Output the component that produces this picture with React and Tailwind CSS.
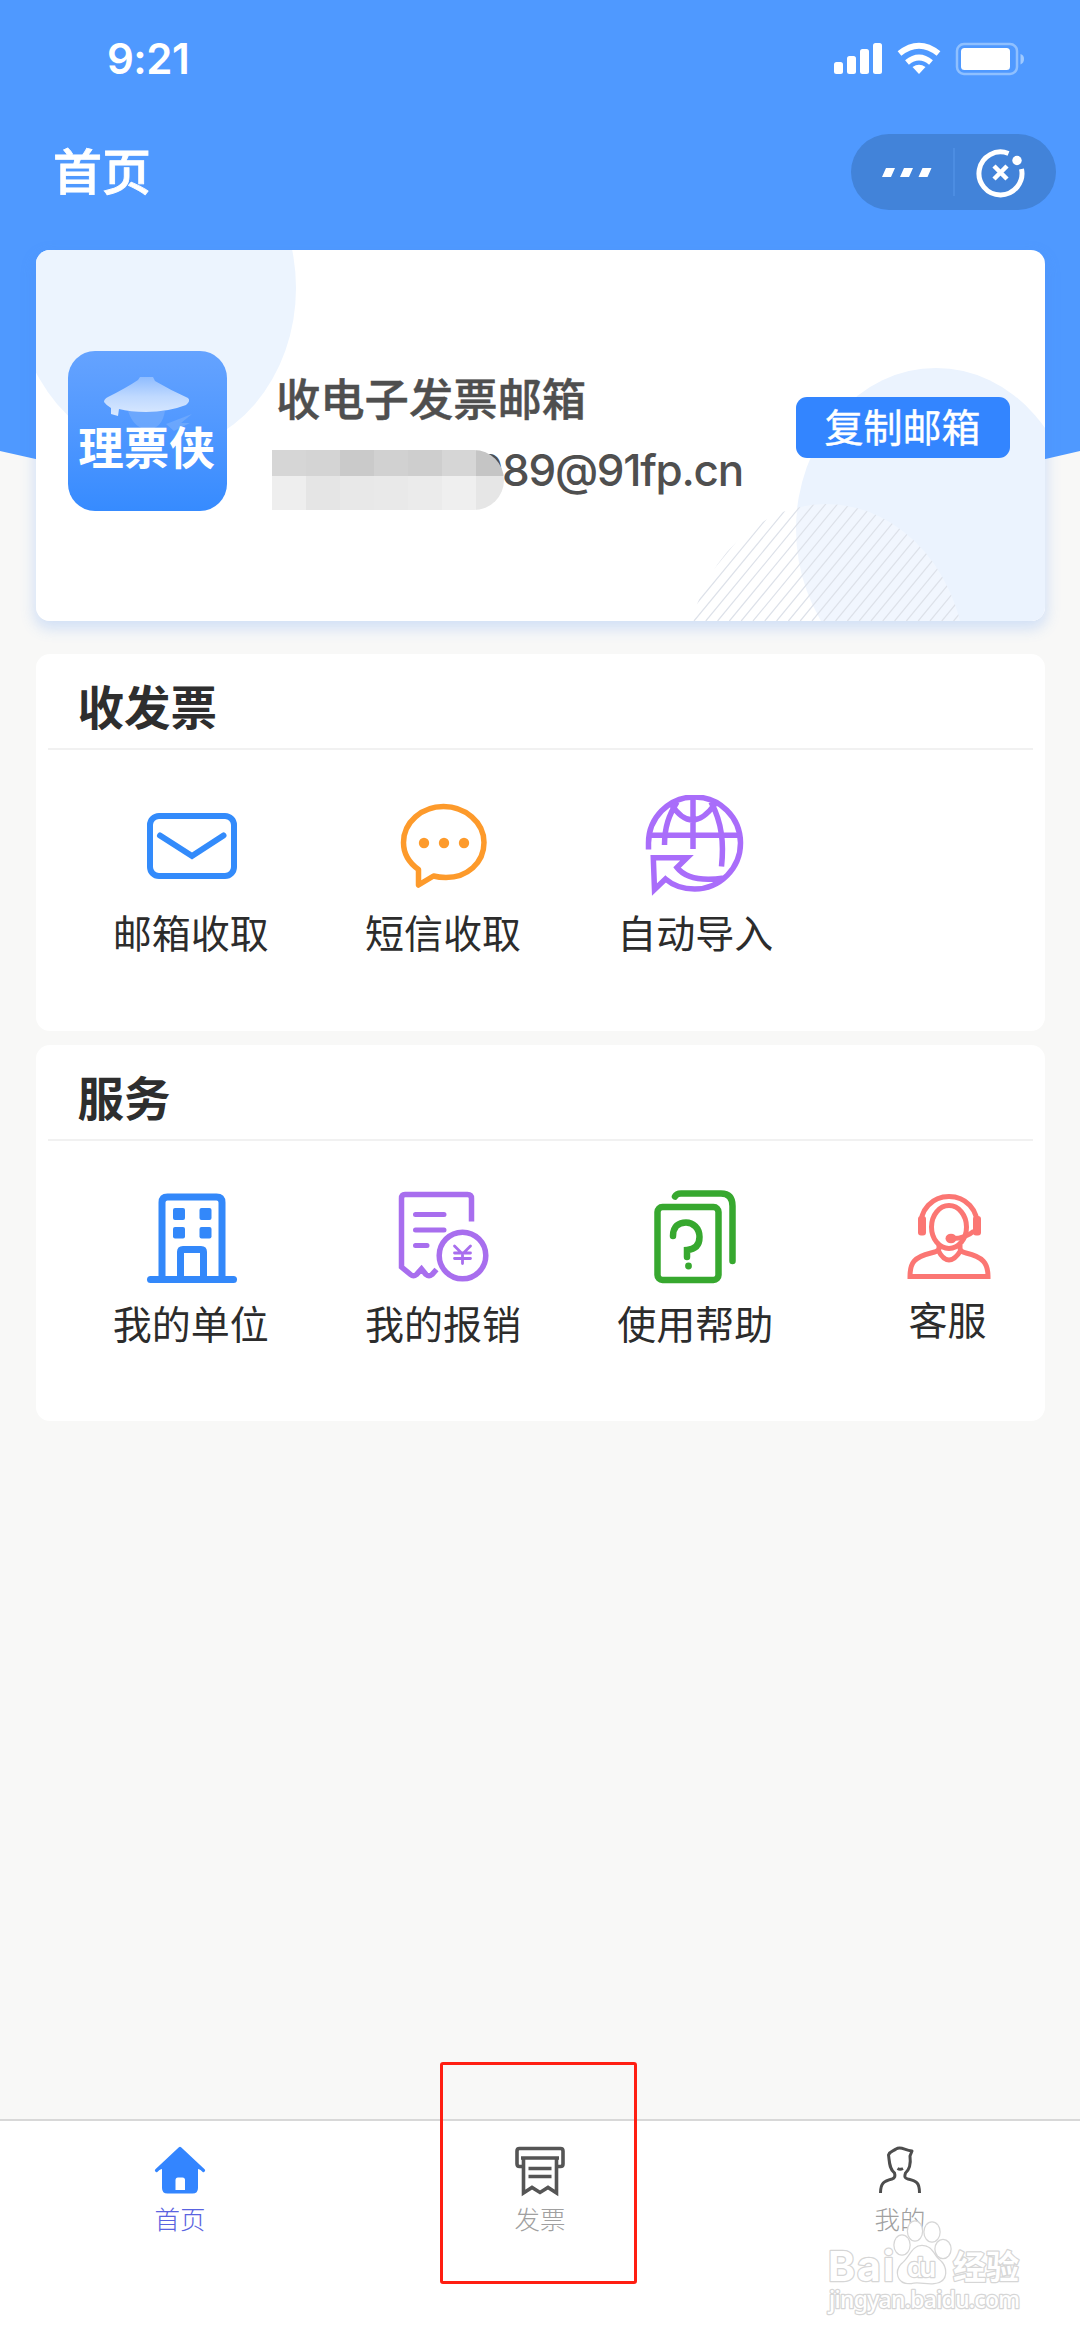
const receiveItems = [
  { label: "邮箱收取", icon: MailIcon },
  { label: "短信收取", icon: SmsIcon },
  { label: "自动导入", icon: ImportIcon },
];

const serviceItems = [
  { label: "我的单位", icon: CompanyIcon },
  { label: "我的报销", icon: ExpenseIcon },
  { label: "使用帮助", icon: HelpIcon },
  { label: "客服", icon: SupportIcon, compact: true },
];

const tabs = [
  { label: "首页", icon: HomeIcon, active: true },
  { label: "发票", icon: InvoiceIcon },
  { label: "我的", icon: ProfileIcon },
];

// greys of the blurred part of the address, two rows of blocks
const mosaic = [
  ["#d6d6d6", "#d4d4d4", "#cacaca", "#d1d1d1", "#cecece", "#d6d6d6", "#c5c5c5"],
  ["#eeeeee", "#e5e5e5", "#e8e8e8", "#e9e9e9", "#ebebeb", "#efefef", "#e6e6e6"],
];

// x of each diagonal where it meets the bottom edge of the card
const hatchLines = Array.from({ length: 36 }, (_, i) => 540 + i * 11.8);

function MailIcon() {
  return (
    <svg width="100" height="100" viewBox="-1 -1 100 100" fill="none" stroke="#338bfb" strokeWidth="6">
      <rect x="8" y="20" width="84" height="60" rx="9" />
      <path d="M18 39.5 50 60 81.500 39.500" strokeLinecap="round" />
    </svg>
  );
}

function SmsIcon() {
  return (
    <svg width="100" height="100" viewBox="0 0 100 100" fill="none" stroke="#fd9a2b" strokeWidth="5.500" strokeLinejoin="round">
      <path d="M25.500 74.500C15 67 10.500 58 10.500 47.500 10.500 27 29 11.500 50.500 11.500S91 27 91 47.500 74 82.500 53 82.500Q46 82.500 40.500 81L25.500 90Z" />
      <g fill="#fd9a2b" stroke="none">
        <circle cx="31" cy="48" r="5.200" />
        <circle cx="51" cy="48" r="5.200" />
        <circle cx="71" cy="48" r="5.200" />
      </g>
    </svg>
  );
}

function ImportIcon() {
  return (
    <svg width="100" height="102" viewBox="0 0 100 102" fill="none" stroke="#a96dfa" strokeWidth="5.500">
      <path d="M3.500 54.500V48.500A46 46 0 1 1 49.700 94Q32 94 20.500 84L9.500 94.500 8.300 62.800H42L32 72.500Q44 88 79 83" />
      <path d="M5 40.300H95M48 4V54M19.500 50C19.500 32 24 20 32 7M76.500 71.500C79 48 77 28 66 7M26 9Q47 41 70 9" />
    </svg>
  );
}

function CompanyIcon() {
  return (
    <svg width="100" height="100" viewBox="-1 -1 100 100" fill="none" stroke="#3388fa" strokeWidth="7">
      <path d="M20 92V15.500Q20 10 25.500 10H74.500Q80 10 80 15.500V92" />
      <path d="M38.500 92V65Q38.500 62.500 41 62.500H59Q61.500 62.500 61.500 65V92" />
      <path d="M8.500 92.500H91.500" strokeLinecap="round" />
      <g fill="#3388fa" stroke="none">
        <rect x="31" y="21" width="12" height="12" rx="2" />
        <rect x="57.500" y="21" width="12" height="12" rx="2" />
        <rect x="31" y="40" width="12" height="11.500" rx="2" />
        <rect x="57.500" y="40" width="12" height="11.500" rx="2" />
      </g>
    </svg>
  );
}

function ExpenseIcon() {
  return (
    <svg width="100" height="100" viewBox="0 0 100 100" fill="none" stroke="#a86eee" strokeWidth="5.500">
      <path d="M78.500 35.500V12.500Q78.500 8.500 74.500 8.500H12Q8.500 8.500 8.500 12.500V81L17.500 88.500Q20.500 91 23.500 88.500L28.500 83 33 88.500Q36 91 39 88.500L43.500 83.500" />
      <path d="M22.500 28.500H51M22.500 44H51M22.500 59.500H34" strokeLinecap="round" strokeWidth="5" />
      <circle cx="69.500" cy="69.500" r="23.300" />
      <path d="M61.500 60 69.500 68 77.500 60M69.500 68V77.500M61.500 67H77.500M61.500 72.500H77.500" strokeWidth="2.800" strokeLinecap="round" />
    </svg>
  );
}

function HelpIcon() {
  return (
    <svg width="100" height="100" viewBox="0 2 100 100" fill="none" stroke="#37a82f" strokeWidth="6.500" strokeLinecap="round">
      <rect x="12.500" y="23" width="61" height="73" rx="5" />
      <path d="M30 12.500Q31.500 9.500 36 9.500H76Q87.500 9.500 87.500 22V77" />
      <path d="M28 52C28 42 34 38.500 41 38.500S54.500 44 54.500 53Q54.500 65 42 66V73" />
      <circle cx="43.500" cy="82" r="3.400" fill="#37a82f" stroke="none" />
    </svg>
  );
}

function SupportIcon() {
  return (
    <svg width="100" height="100" viewBox="-1 1 100 100" fill="none" stroke="#fb7673" strokeWidth="5">
      <path d="M22 40C20 20 34 7.500 50 7.500S80 20 78 40" />
      <ellipse cx="50" cy="38" rx="17.500" ry="21.500" />
      <path d="M40 56V59C40 62 36 63 32 64 15 68 11 74 11 87.500H89C89 74 84 68 67 64 63 63 61 62 61 59V56M39 61Q44 71 50 71T62 61M52 49.500Q66 50 75 42" />
      <g fill="#fb7673" stroke="none">
        <rect x="19" y="27" width="8" height="19.500" rx="3" />
        <rect x="74" y="27" width="8" height="19.500" rx="3" />
        <ellipse cx="52" cy="49.500" rx="5.500" ry="4.800" />
      </g>
    </svg>
  );
}

function HomeIcon() {
  return (
    <svg width="54" height="56" viewBox="0 0 54 56">
      <path d="M27 6 50 28.500 45 27V46Q45 51.500 39.500 51.500H14.500Q9 51.500 9 46V27L4 28.500Z" fill="#3385ff" />
      <path d="M3.500 28.500 27 6.500 50.500 28.500" fill="none" stroke="#3385ff" strokeWidth="3.200" strokeLinecap="round" strokeLinejoin="round" />
      <path d="M22.500 48V38Q22.500 35.500 25 35.500H29.500Q32 35.500 32 38V48Z" fill="#fff" />
    </svg>
  );
}

function InvoiceIcon() {
  return (
    <svg width="54" height="56" viewBox="0 0 54 56" fill="none" stroke="#555" strokeWidth="3.600">
      <path d="M10 24.500H6.500Q4 24.500 4 22V9Q4 6.500 6.500 6.500H47.500Q50 6.500 50 9V22Q50 24.500 47.500 24.500H44" />
      <path d="M8 16H46M10.500 16V51L19 45.500 27 50.500 35 45.500 43.500 51V16M15.500 26.500H38.500M15.500 34.500H38.500" />
    </svg>
  );
}

function ProfileIcon() {
  return (
    <svg width="54" height="56" viewBox="0 1 54 56" fill="none" stroke="#4d4d4d" strokeWidth="3" strokeLinejoin="round">
      <path d="M7.500 52C7.500 42 11 40 19 38 22 37 22.500 35 21.500 32 16 28 16.500 20 15.500 14 17 10 20 10.500 23 8 28 5 31 9 39 10L37 15C38 23 37 28 32.500 32 31.500 35 31 37 35 38 44 40 46.500 42 46.500 52" />
      <path d="M24.500 27.500Q27 29 30 27.500" />
    </svg>
  );
}

function StatusBar() {
  return (
    <div className="flex h-[118px] items-center justify-between pl-[107px] pr-[55px] text-white">
      <span className="font-[Inter] text-[42px] font-semibold leading-none tracking-[-0.5px]">9:21</span>
      <svg width="192" height="34" viewBox="0 0 192 34" fill="#fff">
        <rect x="1" y="20" width="9" height="12" rx="2.500" />
        <rect x="14" y="14" width="9" height="18" rx="2.500" />
        <rect x="27" y="7" width="9" height="25" rx="2.500" />
        <rect x="40" y="1" width="9" height="31" rx="2.500" />
        <g fill="none" stroke="#fff" strokeWidth="6">
          <path d="M66.500 11.500Q86 -4 105.500 11.500" />
          <path d="M74 20.500Q86 10.500 98 20.500" />
        </g>
        <path d="M79.500 25Q86 20.500 92.500 25L86 32Z" />
        <rect x="124" y="2" width="60" height="30" rx="7" fill="none" stroke="#8fc0ff" strokeWidth="2.500" />
        <rect x="128" y="6" width="49" height="22" rx="3.500" />
        <path d="M187.500 12Q191 13 191 17T187.500 22.500Z" fill="#a0caff" />
      </svg>
    </div>
  );
}

function TitleBar() {
  return (
    <div className="flex h-[108px] items-center justify-between pl-[53px] pr-6">
      <h1 className="-mt-2 text-[49px] font-medium leading-none text-white [-webkit-text-stroke:0.8px_#fff]">首页</h1>
      <div className="flex h-[76px] w-[205px] items-center rounded-full bg-[#4283d9]">
        <svg width="205" height="76" viewBox="0 0 205 76" fill="#fff">
          <path d="M35 34H44L40 43H31ZM53 34H62L58 43H49ZM71.500 34H80.500L76.500 43H67.500Z" />
          <path d="M103 14V62" stroke="#5190e4" strokeWidth="1.500" />
          <g fill="none" stroke="#fff" strokeWidth="5">
            <path d="M157.500 19.500A21.500 21.500 0 1 0 170.500 35" />
            <path d="M143 32 156 45M156 32 143 45" strokeWidth="4.500" />
          </g>
          <circle cx="166" cy="26.500" r="4.700" />
        </svg>
      </div>
    </div>
  );
}

function AppLogo() {
  return (
    <div className="relative flex h-40 w-[159px] shrink-0 justify-center overflow-hidden rounded-[27px] bg-linear-to-b from-[#65a3ff] to-[#368bff]">
      <svg className="absolute inset-0" width="159" height="160" viewBox="0 0 159 160">
        <defs>
          <linearGradient id="hat" x1="0" y1="0" x2="0" y2="1">
            <stop offset="0" stopColor="#8fbcff" />
            <stop offset="0.5" stopColor="#bfd9ff" />
            <stop offset="1" stopColor="#dae9ff" />
          </linearGradient>
        </defs>
        <path d="M60 60Q66 78 80 78T97 60ZM98 73 124 63 113 72 122 72 106 80Z" fill="#8ab8fb" opacity="0.45" />
        <path d="M72 26H85L87 30Q104 40 120 47 123 50 118 54 100 61 78 61 62 61 51 58L50 65 43 63V57Q38 54 36 51 36 48 40 46 58 37 70 29Z" fill="url(#hat)" />
      </svg>
      <span className="relative mt-[72px] -ml-0.5 text-[45.500px] font-bold leading-none text-white">理票侠</span>
    </div>
  );
}

function CardBackdrop() {
  return (
    <svg className="absolute inset-0" width="1010" height="371" viewBox="0 0 1010 371">
      <defs>
        <clipPath id="dome">
          <ellipse cx="790" cy="418" rx="140" ry="164" />
        </clipPath>
      </defs>
      <ellipse cx="120" cy="38" rx="140" ry="164" fill="#ecf4fe" />
      <ellipse cx="900" cy="279" rx="140" ry="161" fill="#ebf3fe" />
      <ellipse cx="790" cy="418" rx="140" ry="164" fill="#fff" opacity="0.300" />
      <g clipPath="url(#dome)" stroke="#dde1e9" strokeWidth="1.200">
        {hatchLines.map((x) => (
          <path key={x} d={`M${x} 371l140 -170`} />
        ))}
      </g>
    </svg>
  );
}

function MailboxCard() {
  return (
    <div className="relative mx-[35.500px] h-[371px] overflow-hidden rounded-[14px] bg-white">
      <CardBackdrop />
      <div className="relative flex pl-[32.500px] pr-[35px] pt-[101px]">
        <AppLogo />
        <div className="ml-[45px] mt-6 flex-1">
          <p className="pl-1 text-[44.300px] font-medium leading-[44px] text-[#4f4f4f] [-webkit-text-stroke:0.5px_#4f4f4f]">
            收电子发票邮箱
          </p>
          <div className="relative mt-[31px] flex h-[60px]">
            <span className="-mt-[4px] ml-[203px] whitespace-nowrap font-[Inter] text-[44px] font-medium leading-[48px] tracking-[-1.300px] text-[#4f4f4f]">
              089@91fp.cn
            </span>
            <div className="absolute left-0 top-0 h-[60px] w-[232px] overflow-hidden rounded-r-[30px]">
              {mosaic.map((row, i) => (
                <div key={i} className={i === 0 ? "flex h-[26px]" : "flex h-[34px]"}>
                  {row.map((color, j) => (
                    <span key={j} className="w-[34px] shrink-0" style={{ background: color }} />
                  ))}
                </div>
              ))}
            </div>
          </div>
        </div>
        <button className="mt-[46px] flex h-[61px] w-[214px] shrink-0 items-center justify-center rounded-[11px] bg-[#3385ff] pb-1 text-[39px] leading-none text-white [-webkit-text-stroke:0.4px_#fff]">
          复制邮箱
        </button>
      </div>
    </div>
  );
}

function Section({ title, items }) {
  return (
    <section className="mx-[35.500px] h-[376.500px] shrink-0 rounded-[14px] bg-white">
      <h2 className="mx-3 h-[96px] border-b-2 border-[#f1f1f1] pl-[30px] pt-7 text-[46.500px] font-bold leading-none text-[#2e2e2e]">
        {title}
      </h2>
      <div className="flex pl-[29px]">
        {items.map(({ label, icon: Icon, compact }) => (
          <div key={label} className="flex w-[252.300px] shrink-0 flex-col items-center">
            <div className={compact ? "mt-[49px] h-24" : "mt-[45px] h-[104px]"}>
              <Icon />
            </div>
            <span className="mt-[13px] text-[39px] font-normal leading-none text-[#2c2c2c]">{label}</span>
          </div>
        ))}
      </div>
    </section>
  );
}

function TabBar() {
  return (
    <nav className="relative flex h-[218px] shrink-0 border-t-2 border-[#d8d8d8] bg-white">
      {tabs.map(({ label, icon: Icon, active }) => (
        <div key={label} className="flex flex-1 flex-col items-center pt-[21px]">
          <Icon />
          <span className={`mt-[7px] text-[25.500px] font-light leading-none ${active ? "text-[#5a63e0]" : "text-[#a0a0a0]"}`}>
            {label}
          </span>
        </div>
      ))}
      {/* marker round the invoice tab */}
      <div className="absolute left-[440px] top-[-59px] h-[222px] w-[197px] rounded-[3px] border-3 border-[#ff1e12]" />
      <Watermark />
    </nav>
  );
}

function Watermark() {
  return (
    <svg className="absolute left-[820px] top-[96px]" width="220" height="110" viewBox="0 0 220 110" fill="#fff" stroke="#d6d6d6" strokeWidth="2.500" strokeLinejoin="round" paintOrder="stroke">
      <text x="8" y="64" fontFamily="Inter" fontWeight="700" fontSize="41" textLength="66">Bai</text>
      <ellipse cx="82" cy="28" rx="7.500" ry="9.500" />
      <ellipse cx="95" cy="14" rx="7" ry="9.500" />
      <ellipse cx="112" cy="15" rx="7.500" ry="9.500" />
      <ellipse cx="123" cy="32" rx="7.500" ry="9" />
      <path d="M102 29C112 29 113 38 119 43 127 49 129 65 114 66 107 67 98 64 91 66 77 67 75 54 82 47 90 41 92 29 102 29Z" />
      <text x="87" y="60" fontFamily="Inter" fontWeight="600" fontSize="27" textLength="29">du</text>
      <text x="133" y="62" fontFamily="Noto Sans CJK SC" fontWeight="700" fontSize="33">经验</text>
      <text x="9" y="91" fontFamily="Noto Sans" fontWeight="500" fontSize="23" textLength="191">jingyan.baidu.com</text>
    </svg>
  );
}

export default function App() {
  return (
    <div className="relative flex h-[2337px] w-[1080px] flex-col overflow-hidden bg-[#f8f8f7] font-['Noto_Sans_CJK_SC',sans-serif]">
      <svg className="absolute left-0 top-0" width="1080" height="520" viewBox="0 0 1080 520">
        <path d="M0 0H1080V451Q540 580 0 451Z" fill="#4f99ff" />
      </svg>
      <div className="relative flex flex-1 flex-col">
        <StatusBar />
        <TitleBar />
        <div className="mx-[35.500px] mt-6 -mb-[371px] h-[371px] shrink-0 rounded-[14px] shadow-[0_6px_14px_2px_rgba(79,140,240,0.22)]" />
        <MailboxCard />
        <div className="mt-[33px] flex flex-col gap-3.5">
          <Section title="收发票" items={receiveItems} />
          <Section title="服务" items={serviceItems} />
        </div>
      </div>
      <TabBar />
    </div>
  );
}
